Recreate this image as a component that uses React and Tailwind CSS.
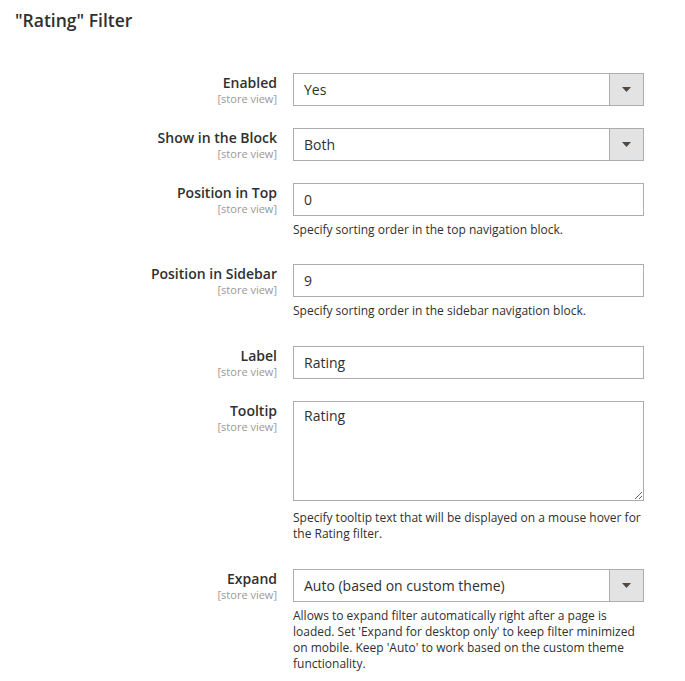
import React from 'react';

function Label({ text }) {
  return (
    <div className="w-[277px] shrink-0 text-right pt-[1px]">
      <div className="text-[14px] leading-[18px] font-semibold text-[#303030]">{text}</div>
      <div className="text-[11px] leading-[14px] text-[#999999]">[store view]</div>
    </div>
  );
}

function Note({ children, className = 'mt-[6px] mb-[4px]' }) {
  return (
    <p className={`${className} text-[12px] leading-[16px] text-[#303030]`}>{children}</p>
  );
}

function Select({ value }) {
  return (
    <div className="flex h-[33px] border border-[#adadad] bg-white">
      <div className="flex-1 flex items-center pl-[10px] text-[14px] text-[#303030]">{value}</div>
      <div className="w-[34px] flex items-center justify-center border-l border-[#adadad] bg-[#e3e3e3]">
        <svg width="9" height="5" viewBox="0 0 9 5">
          <path d="M0 0h9L4.5 5z" fill="#514943" />
        </svg>
      </div>
    </div>
  );
}

function TextInput({ value }) {
  return (
    <div className="flex items-center h-[33px] border border-[#adadad] bg-white pl-[10px] text-[14px] text-[#303030]">
      {value}
    </div>
  );
}

function Row({ label, children }) {
  return (
    <div className="flex items-start pb-[22px]">
      <Label text={label} />
      <div className="w-[351px] ml-[16px]">{children}</div>
    </div>
  );
}

export default function App() {
  return (
    <div className="min-h-screen bg-white pl-[15px] pt-[8px]" style={{ fontFamily: '"Open Sans", sans-serif' }}>
      <h2 className="text-[17.5px] leading-[24px] font-semibold text-[#303030]">"Rating" Filter</h2>

      <div className="mt-[41px] -ml-[15px]">
        <Row label="Enabled">
          <Select value="Yes" />
        </Row>

        <Row label="Show in the Block">
          <Select value="Both" />
        </Row>

        <Row label="Position in Top">
          <TextInput value="0" />
          <Note>Specify sorting order in the top navigation block.</Note>
        </Row>

        <Row label="Position in Sidebar">
          <TextInput value="9" />
          <Note className="mt-[6px] mb-[5px]">Specify sorting order in the sidebar navigation block.</Note>
        </Row>

        <Row label="Label">
          <TextInput value="Rating" />
        </Row>

        <Row label="Tooltip">
          <textarea
            readOnly
            defaultValue="Rating"
            className="block w-full h-[100px] border border-[#adadad] bg-white px-[10px] pt-[5px] text-[14px] leading-[18px] text-[#303030] outline-none"
          />
          <Note className="mt-[9px] mb-[5px]">
            Specify tooltip text that will be displayed on a mouse hover for the Rating filter.
          </Note>
        </Row>

        <Row label="Expand">
          <Select value="Auto (based on custom theme)" />
          <Note className="mt-[6px]">
            Allows to expand filter automatically right after a page is loaded. Set 'Expand for desktop only' to keep filter minimized on mobile. Keep 'Auto' to work based on the custom theme functionality.
          </Note>
        </Row>
      </div>
    </div>
  );
}
